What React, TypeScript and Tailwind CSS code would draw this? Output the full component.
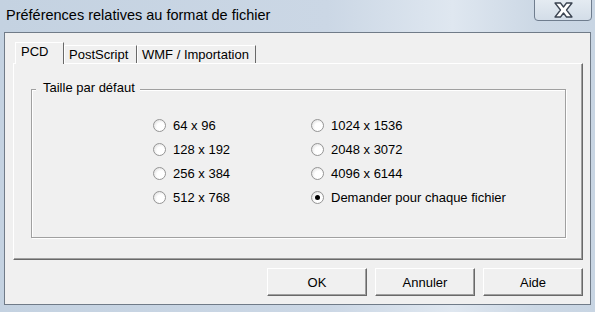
import React from "react";

const font = { fontFamily: '"Liberation Sans", Arial, sans-serif' };

function Radio({ checked }: { checked?: boolean }) {
  return (
    <div className="w-[13px] h-[13px] rounded-full border border-[#959595] bg-[radial-gradient(circle_at_62%_62%,#ffffff_40%,#d4d4d4_100%)] flex items-center justify-center shrink-0">
      {checked && <div className="w-[5px] h-[5px] rounded-full bg-black" />}
    </div>
  );
}

function Option({ label, checked }: { label: string; checked?: boolean }) {
  return (
    <div className="h-[24px] flex items-center gap-[7px]">
      <Radio checked={checked} />
      <span className="text-[13px] leading-[15px] text-black whitespace-nowrap">{label}</span>
    </div>
  );
}

function Btn({ label }: { label: string }) {
  return (
    <div className="w-[100px] h-[28px] bg-[#f0f0f0] border-l border-t border-l-white border-t-white border-r border-b border-r-[#696969] border-b-[#696969] shadow-[inset_-1px_-1px_0_#a0a0a0] flex items-center justify-center text-[13px] leading-[15px] text-black">
      {label}
    </div>
  );
}

export default function App() {
  return (
    <div
      className="w-[595px] h-[312px] relative overflow-hidden bg-[linear-gradient(90deg,#c4d2e1_0%,#cbd7e5_55%,#dfe7f0_76%,#ccd8e5_90%,#c8d5e3_100%)]"
      style={font}
    >
      <div className="h-[32px] pl-[6px] pt-[7px] text-[14.5px] leading-[17px] text-black whitespace-nowrap">
        Préférences relatives au format de fichier
      </div>

      <div className="absolute left-[534px] top-[-1px] w-[58px] h-[22px] border border-[#6f7d8e] rounded-b-[4px] bg-[linear-gradient(180deg,#e4ebf2,#d3dde8)] flex items-center justify-center">
        <svg width="19" height="16" viewBox="-1 -1 19 16">
          <polygon
            points="0,0 5.5,0 8.5,4 11.5,0 17,0 11.5,7 17,14 11.5,14 8.5,10 5.5,14 0,14 5.5,7"
            fill="#ffffff"
            stroke="#3a4350"
            strokeWidth="1.3"
            strokeLinejoin="round"
          />
        </svg>
      </div>

      <div className="ml-[4px] w-[587px] h-[273px] border border-[#707b88] bg-[#f0f0f0] pt-[9px] pl-[8px]">
        <div className="flex items-end h-[21px] ml-[2px]">
          <div className="relative z-10 w-[49px] h-[22px] -mb-[1px] bg-[#f0f0f0] border-l border-t border-l-white border-t-white border-r border-r-[#696969] pl-[5px] pt-[1px] text-[13px] leading-[15px] text-black">
            PCD
          </div>
          <div className="w-[73px] h-[18px] bg-[#f0f0f0] border-l border-t border-l-white border-t-white border-r border-r-[#696969] pl-[4px] pt-[1px] text-[13px] leading-[15px] text-black whitespace-nowrap">
            PostScript
          </div>
          <div className="w-[119px] h-[18px] bg-[#f0f0f0] border-l border-t border-l-white border-t-white border-r border-r-[#696969] pl-[4px] pt-[1px] text-[13px] leading-[15px] text-black whitespace-nowrap">
            WMF / Importation
          </div>
        </div>

        <div className="w-[570px] h-[197px] border-t border-l border-t-white border-l-white border-r border-b border-r-[#696969] border-b-[#696969] shadow-[inset_-1px_-1px_0_#a0a0a0] pt-[25px] pl-[17px]">
          <div className="relative w-[535px] h-[149px] border border-[#a0a0a0] shadow-[inset_1px_1px_0_#ffffff,1px_1px_0_#ffffff] pt-[23px] pl-[121px] flex">
            <span className="absolute left-[4px] top-[-10px] bg-[#f0f0f0] pl-[7px] pr-[5px] text-[13px] leading-[15px] text-black whitespace-nowrap">
              Taille par défaut
            </span>
            <div className="w-[158px] flex flex-col">
              <Option label="64 x 96" />
              <Option label="128 x 192" />
              <Option label="256 x 384" />
              <Option label="512 x 768" />
            </div>
            <div className="flex flex-col">
              <Option label="1024 x 1536" />
              <Option label="2048 x 3072" />
              <Option label="4096 x 6144" />
              <Option label="Demander pour chaque fichier" checked />
            </div>
          </div>
        </div>

        <div className="flex gap-[8px] mt-[8px] ml-[254px]">
          <Btn label="OK" />
          <Btn label="Annuler" />
          <Btn label="Aide" />
        </div>
      </div>
    </div>
  );
}
